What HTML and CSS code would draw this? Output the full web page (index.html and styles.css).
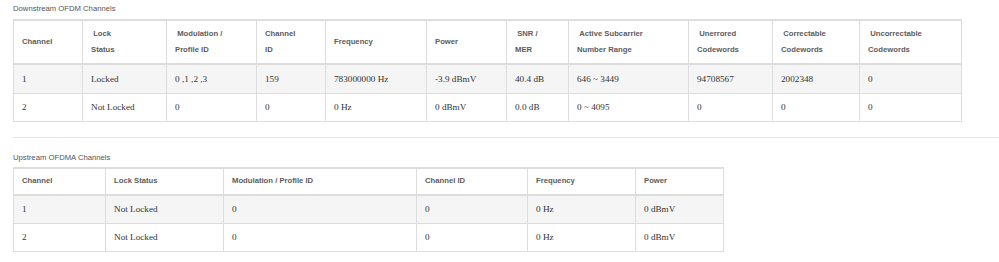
FILE: index.html
```html
<!DOCTYPE html>
<html>
<head>
<meta charset="utf-8">
<link rel="stylesheet" href="styles.css">
</head>
<body>
<div class="page">
  <section class="block">
    <div class="title">Downstream OFDM Channels</div>
    <table class="grid down">
      <colgroup>
        <col class="c69"><col class="c84"><col class="c90"><col class="c69"><col class="c101"><col class="c80"><col class="c62"><col class="c120"><col class="c84"><col class="c87"><col class="c102">
      </colgroup>
      <thead>
        <tr>
          <th>Channel</th>
          <th>&nbsp;Lock<br>Status</th>
          <th>&nbsp;Modulation /<br>Profile ID</th>
          <th>Channel<br>ID</th>
          <th>Frequency</th>
          <th>Power</th>
          <th>&nbsp;SNR /<br>MER</th>
          <th>&nbsp;Active Subcarrier<br>Number Range</th>
          <th>&nbsp;Unerrored<br>Codewords</th>
          <th>&nbsp;Correctable<br>Codewords</th>
          <th>&nbsp;Uncorrectable<br>Codewords</th>
        </tr>
      </thead>
      <tbody>
        <tr class="odd">
          <td>1</td><td>Locked</td><td>0 ,1 ,2 ,3</td><td>159</td><td>783000000 Hz</td><td>-3.9 dBmV</td><td>40.4 dB</td><td>646 ~ 3449</td><td>94708567</td><td>2002348</td><td>0</td>
        </tr>
        <tr>
          <td>2</td><td>Not Locked</td><td>0</td><td>0</td><td>0 Hz</td><td>0 dBmV</td><td>0.0 dB</td><td>0 ~ 4095</td><td>0</td><td>0</td><td>0</td>
        </tr>
      </tbody>
    </table>
  </section>
  <div class="rule"></div>
  <section class="block">
    <div class="title title-up">Upstream OFDMA Channels</div>
    <table class="grid up">
      <colgroup>
        <col class="u1"><col class="u2"><col class="u3"><col class="u4"><col class="u5"><col class="u6">
      </colgroup>
      <thead>
        <tr>
          <th>Channel</th><th>Lock Status</th><th>Modulation / Profile ID</th><th>Channel ID</th><th>Frequency</th><th>Power</th>
        </tr>
      </thead>
      <tbody>
        <tr class="odd">
          <td>1</td><td>Not Locked</td><td>0</td><td>0</td><td>0 Hz</td><td>0 dBmV</td>
        </tr>
        <tr>
          <td>2</td><td>Not Locked</td><td>0</td><td>0</td><td>0 Hz</td><td>0 dBmV</td>
        </tr>
      </tbody>
    </table>
  </section>
</div>
</body>
</html>
```
FILE: styles.css
```css
html, body {
  margin: 0;
  padding: 0;
  background: #fff;
}

.page {
  padding-left: 13px;
  font-family: "Liberation Sans", Arial, sans-serif;
}

.title {
  font-size: 7.7px;
  line-height: 12px;
  color: #555;
  margin: 3px 0 4px;
}

.title-up {
  margin: 14px 0 3px;
}

.rule {
  margin-top: 15px;
  border-top: 1px solid #e3e3e3;
}

.grid {
  border-collapse: collapse;
  table-layout: fixed;
  border: 1px solid #dddddd;
  border-top: 2px solid #dddddd;
}

.grid th,
.grid td {
  border: 1px solid #dddddd;
  padding: 0 8px;
  text-align: left;
  vertical-align: middle;
  white-space: nowrap;
}

.grid th {
  font-family: "Liberation Sans", Arial, sans-serif;
  font-weight: bold;
  font-size: 7.7px;
  color: #5c5c5c;
  border-bottom: 2px solid #dddddd;
}

.grid td {
  font-family: "Liberation Serif", "Times New Roman", serif;
  font-size: 9.2px;
  color: #333;
  height: 27px;
}

.grid tr.odd td {
  background: #f5f5f5;
}

.down {
  width: 948px;
}

.down th {
  height: 42px;
  line-height: 16px;
}

.down td {
  height: 27.5px;
}

.up {
  width: 710px;
}

.up th {
  height: 24.5px;
  line-height: 12px;
}

.c69 { width: 69px; }
.c84 { width: 84px; }
.c90 { width: 90px; }
.c101 { width: 101px; }
.c80 { width: 80px; }
.c62 { width: 62px; }
.c120 { width: 120px; }
.c87 { width: 87px; }
.c102 { width: 102px; }

.u1 { width: 92px; }
.u2 { width: 118px; }
.u3 { width: 193px; }
.u4 { width: 111px; }
.u5 { width: 108px; }
.u6 { width: 88px; }
```
